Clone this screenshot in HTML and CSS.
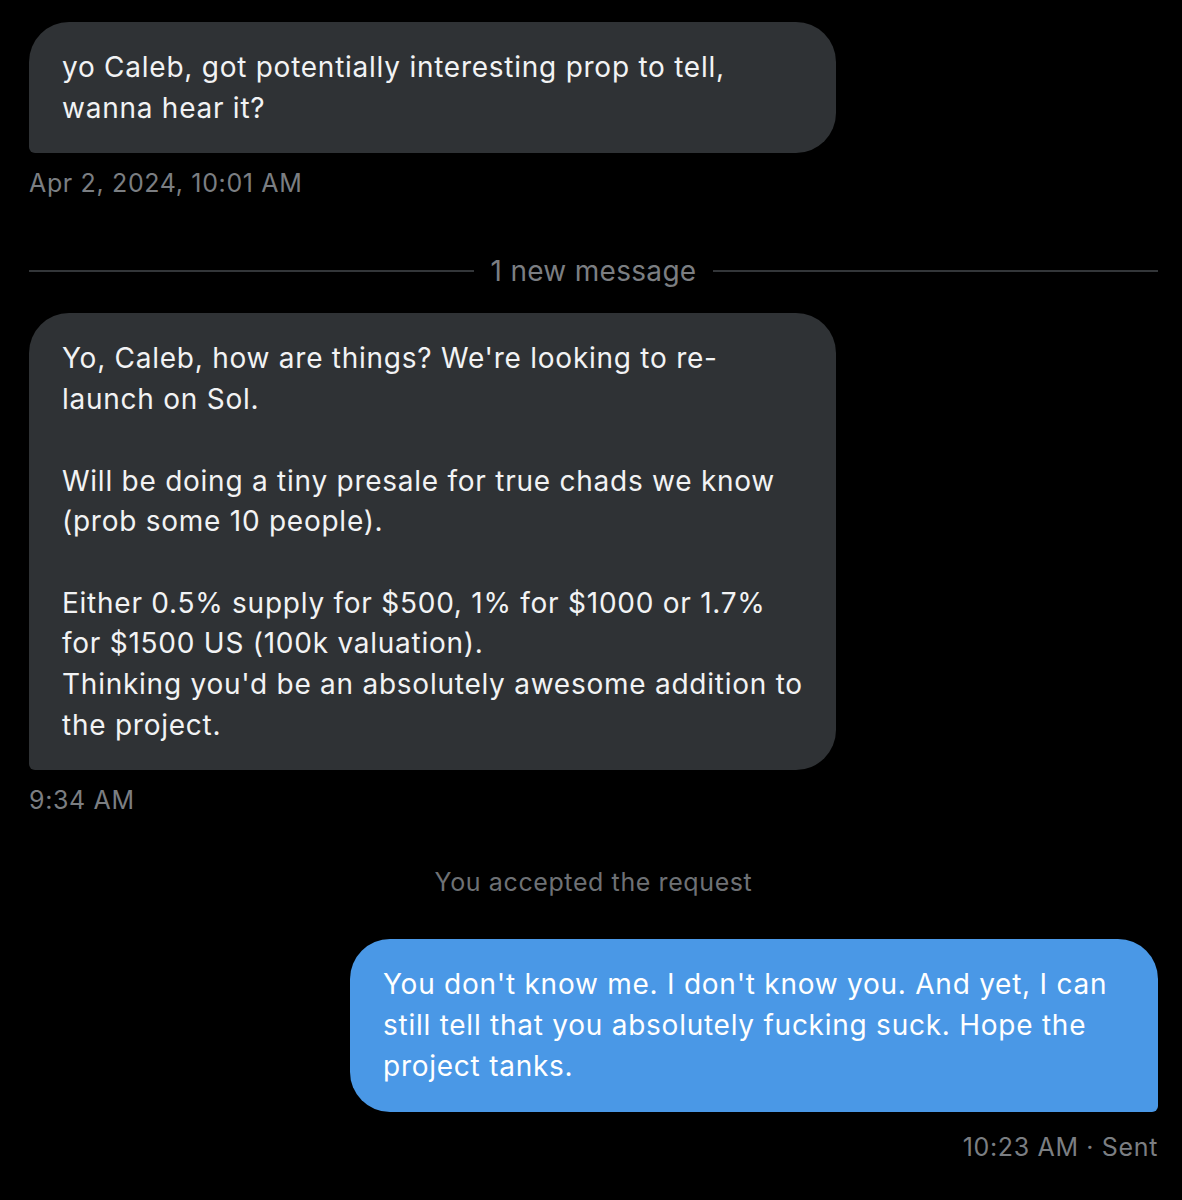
FILE: index.html
```html
<!DOCTYPE html>
<html>
<head>
<meta charset="utf-8">
<link rel="stylesheet" href="styles.css">
</head>
<body>
<div class="chat">
  <div class="msg in">
    <div class="bubble">yo Caleb, got potentially interesting prop to tell,<br>wanna hear it?</div>
    <div class="meta">Apr 2, 2024, 10:01 AM</div>
  </div>

  <div class="divider"><span class="line"></span><span class="label">1 new message</span><span class="line"></span></div>

  <div class="msg in second">
    <div class="bubble">Yo, Caleb, how are things? We're looking to re-<br>launch on Sol.<br><br>Will be doing a tiny presale for true chads we know<br>(prob some 10 people).<br><br>Either 0.5% supply for $500, 1% for $1000 or 1.7%<br>for $1500 US (100k valuation).<br>Thinking you'd be an absolutely awesome addition to<br>the project.</div>
    <div class="meta">9:34 AM</div>
  </div>

  <div class="notice">You accepted the request</div>

  <div class="msg out">
    <div class="bubble">You don't know me. I don't know you. And yet, I can<br>still tell that you absolutely fucking suck. Hope the<br>project tanks.</div>
    <div class="meta">10:23 AM · Sent</div>
  </div>
</div>
</body>
</html>
```

FILE: styles.css
```css
html, body {
  margin: 0;
  padding: 0;
  background: #000;
}
body {
  font-family: Inter, "Noto Sans", "Liberation Sans", sans-serif;
  color: #e7e9ea;
}
.chat {
  padding: 22px 24px 40px 29px;
  display: flex;
  flex-direction: column;
}
.msg {
  display: flex;
  flex-direction: column;
}
.msg.in { align-items: flex-start; }
.msg.out { align-items: flex-end; margin-top: 42px; }
.bubble {
  box-sizing: border-box;
  width: 807px;
  padding: 25px 20px 25px 33px;
  font-size: 28px;
  line-height: 40.7px;
  letter-spacing: 0.75px;
  white-space: nowrap;
  color: #f2f3f4;
}
.in .bubble {
  background: #2f3235;
  border-radius: 40px 40px 40px 6px;
}
.out .bubble {
  background: #4a98e6;
  border-radius: 40px 40px 6px 40px;
  width: 808px;
  color: #ffffff;
}
.meta {
  margin-top: 15px;
  font-size: 25px;
  line-height: 30px;
  letter-spacing: 0.65px;
  color: #7b7e82;
}
.out .meta { margin-top: 20px; }
.divider {
  margin-top: 58px;
  display: flex;
  align-items: center;
  gap: 17px;
  height: 30px;
}
.divider .line {
  flex: 1;
  height: 2px;
  background: #333639;
}
.divider .label {
  font-size: 28px;
  line-height: 30px;
  letter-spacing: 0.3px;
  color: #7b7e82;
}
.second { margin-top: 27px; }
.notice {
  margin-top: 52px;
  text-align: center;
  font-size: 25px;
  line-height: 30px;
  letter-spacing: 0.6px;
  color: #6e7175;
}
```
